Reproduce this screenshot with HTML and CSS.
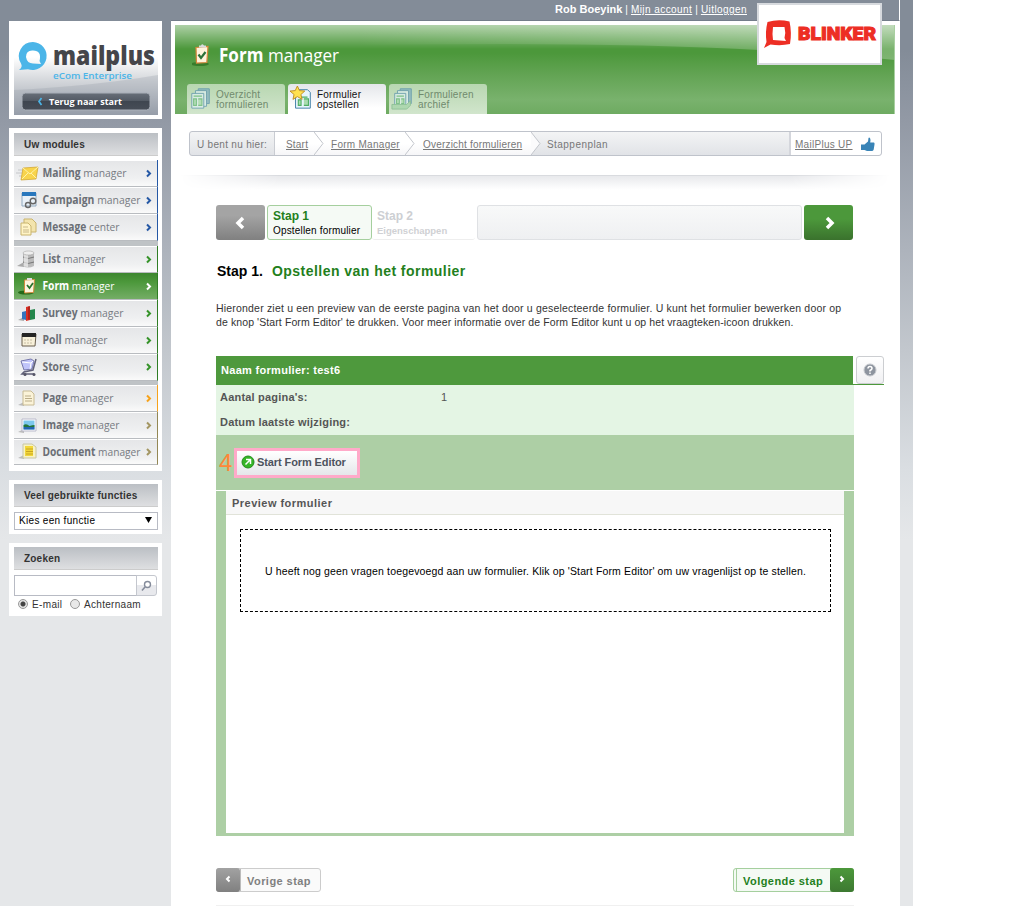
FILE: index.html
```html
<!DOCTYPE html>
<html lang="nl">
<head>
<meta charset="utf-8">
<title>Form manager</title>
<link rel="stylesheet" href="styles.css">
</head>
<body>
<div class="page">
  <aside class="sidebar">
    <section class="panel brand">
      <svg class="brand-art" viewBox="0 0 144 89">
        <defs>
          <linearGradient id="bg" x1="0" y1="0" x2="0" y2="1"><stop offset=".35" stop-color="#fff"/><stop offset=".62" stop-color="#d3d6da"/><stop offset="1" stop-color="#9aa1ac"/></linearGradient>
          <linearGradient id="btn" x1="0" y1="0" x2="0" y2="1"><stop offset="0" stop-color="#686f79"/><stop offset=".48" stop-color="#525963"/><stop offset=".5" stop-color="#3f4650"/><stop offset="1" stop-color="#474d57"/></linearGradient>
        </defs>
        <rect width="144" height="89" fill="url(#bg)"/>
        <path d="M0 64Q80 60 144 49V89H0Z" fill="#8c94a1" opacity=".25"/>
        <path fill="#4bb5e8" fill-rule="evenodd" d="M19 16A14 14 0 1 1 14 43.200L5 44Q9 41 7 37.500A14 14 0 0 1 19 16ZM19 24.500Q12 24 12 31Q13 37.500 19 37.500L27 38L25.500 35Q28 24.500 19 24.500Z"/>
        <text x="39" y="39" textLength="102" lengthAdjust="spacingAndGlyphs" class="t-logo">mailplus</text>
        <text x="39" y="53" textLength="79" lengthAdjust="spacingAndGlyphs" class="t-sub">eCom Enterprise</text>
        <rect x="8" y="67" width="128" height="17" rx="3.500" fill="url(#btn)" stroke="#a9afb8"/>
        <path d="M27.500 72L25 75.500L27.500 79" fill="none" stroke="#4bb5e8" stroke-width="1.700"/>
        <text x="35" y="79" textLength="73" lengthAdjust="spacingAndGlyphs" class="t-back">Terug naar start</text>
      </svg>
    </section>

    <section class="panel modules">
      <h2>Uw modules</h2>
      <ul class="menu">
        <li class="blue"><svg viewBox="0 0 144 27"><path d="M4 10h8M2 13h8M5 16h6" stroke="#c5c7ca"/><path d="M9 8l15-1-2 12-15 1z" fill="#f8d44c" stroke="#cfa02a" stroke-width=".7"/><path d="M9 8l7 6 8-7M8 19l6-6m8 5l-5-5" fill="none" stroke="#fff3a8"/><text x="28.500" y="17" textLength="84" lengthAdjust="spacingAndGlyphs"><tspan>Mailing</tspan> manager</text><path class="go" d="M133 10.500l3 3-3 3"/></svg></li>
        <li class="blue"><svg viewBox="0 0 144 27"><path d="M8 6h14v13H8z" fill="#e9f1f8" stroke="#91a9bf"/><path d="M8 5h14v4H8z" fill="#2877bd"/><circle cx="14" cy="18" r="2.500" class="gear"/><circle cx="19" cy="14" r="2.800" class="gear"/><text x="28.500" y="17" textLength="98" lengthAdjust="spacingAndGlyphs"><tspan>Campaign</tspan> manager</text><path class="go" d="M133 10.500l3 3-3 3"/></svg></li>
        <li class="blue"><svg viewBox="0 0 144 27"><path d="M10 5h8l4 4v9H10z" fill="#f3e4ad" stroke="#c9b46e"/><path d="M7 9h7l3 3v9H7z" fill="#fff4c6" stroke="#c9b46e"/><path d="M9 13h5M9 16h6M9 18h6" stroke="#c9b98c"/><text x="28.500" y="17" textLength="77" lengthAdjust="spacingAndGlyphs"><tspan>Message</tspan> center</text><path class="go" d="M133 10.500l3 3-3 3"/></svg></li>
        <li class="split"></li>
        <li class="green"><svg viewBox="0 0 144 27"><path d="M3 20l7-4v5z" fill="#aaa"/><path d="M9 7v13q5 3 11 0V7" fill="#bbb"/><path d="M9 11q5 3 11 0M9 16q5 3 11 0" fill="none" stroke="#777"/><path d="M10 8v12q2 1 4 1V9z" fill="#eee" opacity=".7"/><ellipse cx="14.500" cy="7" rx="5.500" ry="2" fill="#eee" stroke="#999" stroke-width=".5"/><text x="28.500" y="17" textLength="63" lengthAdjust="spacingAndGlyphs"><tspan>List</tspan> manager</text><path class="go" d="M133 10.500l3 3-3 3"/></svg></li>
        <li class="green active"><svg viewBox="0 0 144 27"><ellipse cx="12" cy="19.500" rx="8" ry="2" fill="#246818"/><path d="M10.500 7l10-.5-1 13-9 .5z" fill="#fff6df" stroke="#d28b3e"/><path d="M13 7V5h5v2z" fill="#ddd"/><path d="M13 12l2.500 3 3.500-5" fill="none" stroke="#28732e" stroke-width="1.700"/><text x="28.500" y="17" textLength="72" lengthAdjust="spacingAndGlyphs"><tspan>Form</tspan> manager</text><path class="go" d="M133 10.500l3 3-3 3"/></svg></li>
        <li class="green"><svg viewBox="0 0 144 27"><path d="M4 20l6-3v4z" fill="#aaa"/><path d="M8 12l4-1v9l-4-1z" fill="#3474bd"/><path d="M12 7l4-1v14l-4 1z" fill="#d92f24"/><path d="M16 10l5-1v10l-5 1z" fill="#24864c"/><path d="M15 6.500v13" stroke="#8b1711" fill="none"/><text x="28.500" y="17" textLength="81" lengthAdjust="spacingAndGlyphs"><tspan>Survey</tspan> manager</text><path class="go" d="M133 10.500l3 3-3 3"/></svg></li>
        <li class="green"><svg viewBox="0 0 144 27"><path d="M8 7h14l-1 12H8z" fill="#f7f0d9" stroke="#695f4d"/><path d="M8 6h14v4H8z" fill="#252525"/><path d="M10 13h9M10 16h9" stroke="#c7bea4" stroke-dasharray="2 1"/><text x="28.500" y="17" textLength="65" lengthAdjust="spacingAndGlyphs"><tspan>Poll</tspan> manager</text><path class="go" d="M133 10.500l3 3-3 3"/></svg></li>
        <li class="green"><svg viewBox="0 0 144 27"><path d="M7 7l10-2 3 2-2 8-8 1z" fill="#c0c4fa" stroke="#7779ad"/><path d="M8 8l9 1 2-2M17 9l-1 6" stroke="#fff" fill="none"/><path d="M22 5l-3 11-9 2-2 2h12" fill="none" stroke="#606078" stroke-width="1.500"/><circle cx="11" cy="20.500" r="1.500" fill="#556"/><circle cx="20" cy="20.500" r="1.500" fill="#556"/><text x="28.500" y="16.500" textLength="51" lengthAdjust="spacingAndGlyphs"><tspan>Store</tspan> sync</text><path class="go" d="M133 10l3 3-3 3"/></svg></li>
        <li class="split last"></li>
        <li class="orange"><svg viewBox="0 0 144 27"><path d="M4 20l6-3v4z" fill="#bbb"/><path d="M9 6h8l3 3v11H9z" fill="#fbf3d8" stroke="#c8bb94"/><path d="M11 11h6M11 13.500h7M11 16h7" stroke="#b9ac88"/><text x="28.500" y="17" textLength="71" lengthAdjust="spacingAndGlyphs"><tspan>Page</tspan> manager</text><path class="go" d="M133 10.500l3 3-3 3"/></svg></li>
        <li class="olive"><svg viewBox="0 0 144 27"><path d="M4 20l6-3v4z" fill="#bbb"/><path d="M8 7h14v12H8z" fill="#fff" stroke="#bbc"/><path d="M9.500 8.500h11v9h-11z" fill="#7cc8ee"/><path d="M9.500 13q3-2 6 1 3-1 5-1v2h-11z" fill="#25763a"/><path d="M9.500 15h11v2.500h-11z" fill="#2467b2"/><text x="28.500" y="17" textLength="77" lengthAdjust="spacingAndGlyphs"><tspan>Image</tspan> manager</text><path class="go" d="M133 10.500l3 3-3 3"/></svg></li>
        <li class="olive end"><svg viewBox="0 0 144 27"><path d="M4 19l6-3v4z" fill="#bbb"/><path d="M9 5h9l4 3v11H9z" fill="#f8f2c4" stroke="#c8c7a4"/><path d="M11 7h8v10h-8z" fill="#f2d73a"/><path d="M12 10h7M12 12.500h7M12 15h7" stroke="#c8a522"/><text x="28.500" y="16.500" textLength="98" lengthAdjust="spacingAndGlyphs"><tspan>Document</tspan> manager</text><path class="go" d="M133 10l3 3-3 3"/></svg></li>
      </ul>
    </section>

    <section class="panel functions">
      <h2>Veel gebruikte functies</h2>
      <div class="select"><span>Kies een functie</span><i></i></div>
    </section>

    <section class="panel search">
      <h2>Zoeken</h2>
      <div class="search-row"><input type="text" aria-label="Zoeken"><button aria-label="Zoek"><svg width="11" height="12" viewBox="0 0 11 12"><circle cx="6.500" cy="4.500" r="3" fill="#fff" stroke="#858c9b" stroke-width="1.400"/><path d="M4 7L1 10.500" stroke="#858c9b" stroke-width="1.600"/></svg></button></div>
      <div class="radios"><i class="radio on"></i><span class="r-mail">E-mail</span><i class="radio"></i><span class="r-name">Achternaam</span></div>
    </section>
  </aside>

  <main class="main">
    <div class="topbar"><b>Rob Boeyink</b><span>|</span><a>Mijn account</a><span>|</span><a>Uitloggen</a></div>
    <div class="content">
      <header class="header">
        <svg class="gloss" viewBox="0 0 720 89" preserveAspectRatio="none">
          <defs>
            <linearGradient id="glow" x1="0" y1="0" x2="0" y2="1"><stop offset="0" stop-color="#fff" stop-opacity=".55"/><stop offset="1" stop-color="#fff" stop-opacity="0"/></linearGradient>
            <linearGradient id="sweep"><stop offset=".25" stop-color="#fff" stop-opacity="0"/><stop offset=".8" stop-color="#fff" stop-opacity=".22"/><stop offset="1" stop-color="#fff" stop-opacity=".26"/></linearGradient>
          </defs>
          <path d="M0 0H720V24H0Z" fill="url(#glow)"/>
          <path d="M0 0H720V35Q560 19 330 19Q150 19 0 24Z" fill="url(#sweep)"/>
          <path d="M719.500 0V89" stroke="#a8cfa0"/>
        </svg>
        <svg class="title" viewBox="0 0 160 30">
          <ellipse cx="8" cy="24" rx="9" ry="2" fill="#2b6e1f" opacity=".7"/><path d="M4 7.500l12-1-1.200 16-10.300.5z" fill="#fff4dc" stroke="#d8873d" stroke-width="1.200"/><path d="M7 7.500v-2h2q1-2.500 3 0h2v2z" fill="#d9dbde"/><path d="M6.500 14.500l2.500 3.500 4.500-6" fill="none" stroke="#2d7138" stroke-width="2.200"/>
          <text x="27" y="22" textLength="120" lengthAdjust="spacingAndGlyphs"><tspan>Form</tspan> manager</text>
        </svg>
        <nav class="tabs">
          <a class="tab dim"><svg viewBox="0 0 26 26"><path class="sheet back" d="M10 3h12v16H10z"/><path class="sheet" d="M7 5h12v17H7z"/><path class="sheet" d="M3 8h13v16H3z"/><path d="M5 11h9M5 14h3v7H5zM10 14h4v7h-4" class="grid"/></svg><span>Overzicht<br>formulieren</span></a>
          <a class="tab current"><svg viewBox="0 0 26 26"><path class="sheet" d="M9 4h10l3 3v17H6V8z"/><path d="M11 12h8M9 15h3v6H9zM15 14h5v7h-5" class="grid"/><path d="M8 0l2.300 5 5.700.5-4.200 3.700 1.300 5.300L8 11.500 3.200 14.500l1.200-5.300L0 5.500 5.700 5z" fill="#ffe14f" stroke="#bd8b22"/></svg><span>Formulier<br>opstellen</span></a>
          <a class="tab dim"><svg viewBox="0 0 26 26"><path class="sheet back" d="M10 3h12v16H10z"/><path class="sheet" d="M7 5h12v17H7z"/><path class="sheet" d="M4 8h12v13H4z"/><path d="M6 11h8M6 14h3v5H6zM11 14h3v5h-3" class="grid"/><path d="M1 20h16l4-4v5l-4 4H1z" fill="#9bd2a2" stroke="#67aa77"/></svg><span>Formulieren<br>archief</span></a>
        </nav>
        <div class="client"><svg viewBox="0 0 119 56"><path fill="#ed2e24" fill-rule="evenodd" d="M7.500 16Q18 13 29.500 15.500Q32 27 30 38Q21 40 10.500 38.500L4 42L6.500 36Q5 26 7.500 16ZM13 21Q12 28 13 34L26 35L24.500 32Q26 27 24.500 21Z"/><text x="38" y="34" textLength="78" lengthAdjust="spacingAndGlyphs">BLINKER</text></svg></div>
      </header>

      <div class="crumbs">
        <span class="where">U bent nu hier:</span>
        <span class="trail"><a class="c1">Start</a><svg class="sep" viewBox="0 0 10 23"><path d="M0 0l9 11.500L0 23"/></svg><a class="c2">Form Manager</a><svg class="sep" viewBox="0 0 10 23"><path d="M0 0l9 11.500L0 23"/></svg><a class="c3">Overzicht formulieren</a></span>
        <span class="here"><svg class="sep edge" viewBox="0 0 10 23"><path d="M0 0l9 11.500L0 23"/></svg><em>Stappenplan</em></span>
        <span class="up"><a>MailPlus UP</a><svg width="15" height="16" viewBox="0 0 15 16"><path d="M1 8.500h3.500L8 5.500 8.500 2q.5-1 1.500 0 1 2 .2 4.500H14q.8.500.5 2l-.8 5q-.4 1.500-2 1.500H7L4.500 14H1z" fill="#3984b7"/></svg></span>
      </div>
      <div class="shade"></div>

      <div class="steps">
        <div class="nav prev"><svg viewBox="0 0 12 14"><path d="M8 2L3 7l5 5"/></svg></div>
        <div class="step now"><b>Stap 1</b><span>Opstellen formulier</span></div>
        <div class="step later"><b>Stap 2</b><span>Eigenschappen</span></div>
        <div class="rest"></div>
        <div class="nav next"><svg viewBox="0 0 12 14"><path d="M4 2l5 5-5 5"/></svg></div>
      </div>

      <h1><span class="num">Stap 1.</span><span class="ttl">Opstellen van het formulier</span></h1>
      <p class="intro"><span class="l1">Hieronder ziet u een preview van de eerste pagina van het door u geselecteerde formulier. U kunt het formulier bewerken door op</span><br><span class="l2">de knop 'Start Form Editor' te drukken. Voor meer informatie over de Form Editor kunt u op het vraagteken-icoon drukken.</span></p>

      <section class="form">
        <div class="form-head"><div class="name">Naam formulier: test6</div><div class="help"><svg width="14" height="14" viewBox="0 0 14 14"><circle cx="7" cy="7" r="6" fill="#8d949f" stroke="#c5c8cd"/><path d="M5 5.500Q5 3.500 7 3.500T9 5.500Q9 6.500 7 7.500V8.500M7 9.500V11" fill="none" stroke="#fff" stroke-width="1.500"/></svg></div></div>
        <div class="info"><div><b class="i1">Aantal pagina's:</b><span>1</span></div><div><b class="i2">Datum laatste wijziging:</b></div></div>
        <div class="action"><span class="four">4</span><div class="start"><svg width="14" height="14" viewBox="0 0 14 14"><circle cx="7" cy="7" r="6" fill="#35b526" stroke="#248c1c"/><path d="M4.500 9.500L9 5M5 4.500h4.500V9" fill="none" stroke="#fff" stroke-width="1.500"/></svg><b>Start Form Editor</b></div></div>
        <div class="preview"><div class="preview-head">Preview formulier</div><div class="empty"><span>U heeft nog geen vragen toegevoegd aan uw formulier. Klik op 'Start Form Editor' om uw vragenlijst op te stellen.</span></div></div>
      </section>

      <div class="bottom">
        <div class="btn back"><i><svg viewBox="0 0 6 8"><path d="M4.500 1.500L2 4l2.500 2.500"/></svg></i><b>Vorige stap</b></div>
        <div class="btn fwd"><b>Volgende stap</b><i><svg viewBox="0 0 6 8"><path d="M1.500 1.500L4 4 1.500 6.500"/></svg></i></div>
      </div>
      <div class="rule"></div>
    </div>
  </main>
</div>
</body>
</html>
```
FILE: styles.css
```css
* { box-sizing: border-box; }
body { margin: 0; background: #fff; font: 11px/14px "Liberation Sans", Arial, sans-serif; color: #444; overflow: hidden; }
svg { display: block; flex: none; }
a { text-decoration: underline; }
.page { display: flex; width: 913px; height: 906px; background: linear-gradient(#838c98 0, #838c98 50px, #9299a5 120px, #adb3bc 250px, #c2c7cd 350px, #dadee2 470px, #e5e7e9 540px); }
.sidebar { width: 171px; padding: 21px 0 0 9px; flex: none; }
.panel { width: 153px; padding: 4px 4px 0 5px; margin-bottom: 9px; background: #fff; }
.brand { height: 98px; padding-top: 5px; }
.brand-art { width: 144px; height: 89px; }
.t-logo { font: 800 27px "Open Sans", sans-serif; fill: #45464a; }
.t-sub { font: 600 9.5px "Open Sans", sans-serif; fill: #4bb5e8; }
.t-back { font: 700 9.5px "Open Sans", sans-serif; fill: #fff; }
.panel h2 { height: 23px; margin: 0 0 5px; padding-left: 10px; border-bottom: 1px solid #ccc; background: linear-gradient(#bbbfc4, #dedfe1); font: bold 10px/23px "Liberation Sans", Arial, sans-serif; letter-spacing: .2px; color: #333; white-space: nowrap; }
.modules { height: 343px; padding-top: 5px; }
.modules h2 { margin-bottom: 4px; }
.functions { height: 54px; }
.search { height: 73px; }

.menu { list-style: none; margin: 0; padding: 0; }
.menu li { height: 27px; border-bottom: 1px solid #b9bcc0; border-right: 1px solid #777; background: linear-gradient(#fff 1px, #e5e6e8 1px, #eff0f1 70%, #fafafa); }
.menu svg { width: 144px; height: 27px; overflow: visible; }
.menu text { font: 11.5px "Open Sans", sans-serif; fill: #777b82; }
.menu tspan { font-weight: 700; fill: #6b6f76; }
.menu .gear { fill: none; stroke: #666; stroke-width: 1.4; }
.go { fill: none; stroke: currentColor; stroke-width: 2; }
.menu .blue { color: #2558a5; border-right-color: #2558a5; }
.menu .green { color: #359329; border-right-color: #2f7d25; }
.menu .orange { color: #f6a21b; border-right-color: #f6a21b; }
.menu .olive { color: #a39663; border-right-color: #938754; }
.menu .active { color: #fff; background: linear-gradient(#3c862e, #4c983b 35%, #74ad66); }
.menu .active text, .menu .active tspan { fill: #fff; }
.menu .split { height: 5px; background: #bfc3c6; border: 0; }
.menu .split.last { height: 4px; }
.menu .end { height: 26px; }

.select { display: flex; justify-content: space-between; height: 18px; padding: 0 5px 0 4px; border: 1px solid #b8bbc4; font-size: 10px; line-height: 16px; letter-spacing: .32px; color: #000; }
.select i { margin-top: 4px; width: 7px; height: 6px; background: #000; clip-path: polygon(0 0, 100% 0, 50% 100%); }
.search-row { display: flex; height: 21px; width: 143px; }
.search-row input { width: 123px; border: 1px solid #b8bbc4; padding: 0; }
.search-row button { display: flex; align-items: center; justify-content: center; width: 21px; margin-left: -1px; padding: 0; border: 1px solid #c4c7ce; border-radius: 0 3px 3px 0; background: linear-gradient(#fff 50%, #e8e9ed 50%); }
.radios { display: flex; align-items: center; height: 17px; padding-left: 4px; font-size: 10px; color: #333; }
.radio { width: 10px; height: 10px; margin-top: -2px; border: 1px solid #999; border-radius: 50%; background: #e8e8e8; }
.radio.on { background: radial-gradient(circle, #444 0 2px, #e4e4e4 3px); }
.r-mail { width: 42px; padding-left: 4px; letter-spacing: .35px; }
.r-name { padding-left: 4px; letter-spacing: .3px; }

.main { width: 729px; flex: none; }
.topbar { display: flex; justify-content: flex-end; gap: 3px; height: 21px; padding: 3px 152px 0 0; border-right: 1px solid #fff; border-bottom: 1px solid #737d8a; font-size: 10px; line-height: 14px; color: #fff; white-space: nowrap; }
.topbar b { font-size: 11px; line-height: 13px; }
.topbar a { letter-spacing: .43px; }
.content { height: 885px; padding: 4px 5px 0 3px; background: #fff; border-left: 1px solid #fff; }
.header { position: relative; display: flex; flex-direction: column; justify-content: space-between; height: 89px; background: linear-gradient(#4c983b 0, #4c983b 28px, #63a454 50px, #79b26d 75px, #6eab61 89px); }
.gloss { position: absolute; inset: 0; width: 720px; height: 89px; }
.title { position: relative; width: 160px; height: 30px; margin: 15px 0 0 17px; }
.title text { font: 400 19px "Open Sans", sans-serif; fill: #fff; }
.title tspan { font-weight: 700; }
.tabs { position: relative; display: flex; gap: 3px; padding-left: 12px; }
.tab { display: flex; width: 98px; height: 30px; padding: 1px 0 0 2px; gap: 3px; border-radius: 3px 3px 0 0; color: #111; text-decoration: none; font-size: 10px; line-height: 10px; letter-spacing: .22px; white-space: nowrap; }
.tab svg { width: 24px; height: 26px; }
.tab span { padding-top: 5px; }
.tab.dim { background: linear-gradient(#b8d7b1, #d1e5cc); color: #708a6d; }
.tab.dim svg { opacity: .6; }
.tab.current { background: linear-gradient(#e4e6ea, #fff 80%); }
.sheet { fill: #e7f5fb; stroke: #397ba4; }
.sheet.back { fill: #77a9c1; }
.grid { fill: #a8dcae; stroke: #4fae65; stroke-width: 1.2; }
.client { position: absolute; right: 13px; top: -22px; width: 125px; height: 62px; padding: 1px; border: 2px solid #d7dade; background: #fff; }
.client svg { width: 119px; height: 56px; }
.client text { font: 900 19px Roboto, sans-serif; fill: #ed2e24; stroke: #ed2e24; stroke-width: 1.1; }

.crumbs { display: flex; width: 693px; height: 25px; margin: 17px 0 0 14px; border: 1px solid #bfc3cb; border-radius: 3px; background: linear-gradient(#f3f4f5, #e1e3e7); font-size: 10px; line-height: 25px; letter-spacing: .2px; color: #777; white-space: nowrap; }
.crumbs > span { display: flex; }
.where { width: 85px; padding-left: 7px; border-right: 1px solid #c9ccd2; letter-spacing: .3px; }
.trail { width: 256px; padding-left: 11px; background: linear-gradient(#fff 50%, #f6f6f8); }
.c1 { width: 28px; }
.c2 { width: 74px; margin-left: 7px; letter-spacing: .28px; }
.c3 { margin-left: 8px; }
.sep { width: 10px; height: 23px; fill: none; stroke: #c3c6cc; }
.sep.edge { fill: #fbfbfc; }
.here { flex: 1; }
.here em { font-style: normal; padding-left: 6px; letter-spacing: .45px; }
.up { width: 92px; padding-left: 4px; border-left: 2px solid #d4d6dc; background: #fff; border-radius: 0 3px 3px 0; }
.up a { width: 58px; letter-spacing: .28px; }
.up svg { margin: 4px 0 0 7px; }
.shade { width: 710px; height: 18px; margin: 19px 0 0 5px; border-top: 1px solid #d9dbdf; background: linear-gradient(#e8e9ec, #fff 80%); -webkit-mask-image: linear-gradient(90deg, transparent, #000 14%, #000 86%, transparent); }

.steps { display: flex; gap: 2px; width: 637px; height: 35px; margin: 12px 0 0 41px; }
.nav { display: flex; align-items: center; justify-content: center; width: 49px; border-radius: 3px; }
.nav svg { width: 12px; height: 14px; fill: none; stroke: #fff; stroke-width: 3.5; }
.prev { background: linear-gradient(#a4a4a4 30%, #808080); }
.next { background: linear-gradient(#4c983b 40%, #3a722d); }
.step { display: flex; flex-direction: column; width: 105px; padding: 3px 0 0 5px; border: 1px solid #a5cf9e; border-radius: 3px; background: #f5faf5; font-size: 10px; line-height: 15px; letter-spacing: .17px; color: #000; white-space: nowrap; }
.step b { font-size: 12px; line-height: 14px; letter-spacing: 0; color: #237f1c; }
.step.later { width: 103px; margin-left: -2px; border: 0; border-bottom: 1px solid #eee; background: #fff; color: #d0d1d4; font-weight: bold; font-size: 9.5px; letter-spacing: 0; padding-top: 4px; }
.step.later b { color: #cdcfd3; }
.rest { flex: 1; border: 1px solid #dfe1e4; border-radius: 3px; background: linear-gradient(#f8f9f9, #eff0f2); }
h1 { display: flex; margin: 23px 0 0 42px; font-size: 14px; line-height: 16px; color: #000; white-space: nowrap; }
.num { width: 55px; }
.ttl { color: #237f1c; letter-spacing: .46px; }
.intro { margin: 22px 0 0 41px; color: #333; font-size: 10.5px; line-height: 14px; white-space: nowrap; }
.l1 { letter-spacing: .19px; }
.l2 { letter-spacing: .1px; }

.form { width: 668px; margin: 27px 0 0 41px; }
.form-head { display: flex; gap: 3px; height: 29px; background: linear-gradient(#fff 28px, #4c983b 28px); }
.name { width: 637px; padding-left: 5px; background: #4e993d; font-weight: bold; line-height: 29px; letter-spacing: .3px; color: #fff; }
.help { display: flex; align-items: center; justify-content: center; width: 28px; height: 28px; border: 1px solid #ccced1; border-radius: 3px; background: linear-gradient(#fff, #f0f0f2); }
.info { width: 638px; height: 50px; background: #e4f5e4; font-size: 11px; line-height: 25px; color: #555; }
.info div { display: flex; padding-left: 4px; }
.info b { width: 221px; letter-spacing: .2px; }
.action { display: flex; align-items: center; width: 638px; height: 55px; padding-left: 3px; background: #adcfa5; }
.four { width: 15px; font: 24px/26px "Liberation Sans", sans-serif; color: #ff8638; }
.start { display: flex; align-items: center; gap: 2px; width: 126px; height: 30px; padding: 0 0 2px 4px; border: 3px solid #ffaac9; background: linear-gradient(#fff, #e5e7ea); color: #4d535e; letter-spacing: -.1px; white-space: nowrap; }
.preview { width: 638px; height: 345px; margin-top: 1px; border: solid #adcfa5; border-width: 0 10px 3px; }
.preview-head { height: 24px; padding-left: 6px; border-bottom: 1px solid #e1e3d9; background: #f7f7f7; font-weight: bold; line-height: 25px; letter-spacing: .48px; color: #555; }
.empty { display: flex; align-items: center; width: 591px; height: 83px; margin: 14px 0 0 14px; padding-left: 24px; border: 1px dashed #000; color: #000; font-size: 10.5px; letter-spacing: .15px; white-space: nowrap; }

.bottom { display: flex; justify-content: space-between; width: 638px; margin: 32px 0 0 41px; }
.btn { display: flex; height: 24px; border: 1px solid #ccc; border-radius: 3px; background: #fafafa; line-height: 25px; letter-spacing: .45px; color: #808080; white-space: nowrap; }
.btn i { display: flex; justify-content: center; width: 24px; height: 24px; margin: -1px; padding-top: 7px; border-radius: 3px; background: linear-gradient(#a2a2a2, #808080); }
.btn svg { width: 6px; height: 8px; fill: none; stroke: #fff; stroke-width: 2; }
.back { width: 105px; }
.back b { margin-left: 1px; padding-left: 6px; border-left: 1px solid #bbb; }
.fwd { width: 121px; border-color: #a5cf9e; background: #f4faf4; color: #237f1c; justify-content: space-between; }
.fwd b { margin-left: 2px; padding-left: 6px; border-left: 1px solid #a5cf9e; }
.fwd i { background: linear-gradient(#4c983b, #3d7931); }
.rule { width: 638px; height: 1px; margin: 13px 0 0 41px; background: #f0f0f0; }
```
